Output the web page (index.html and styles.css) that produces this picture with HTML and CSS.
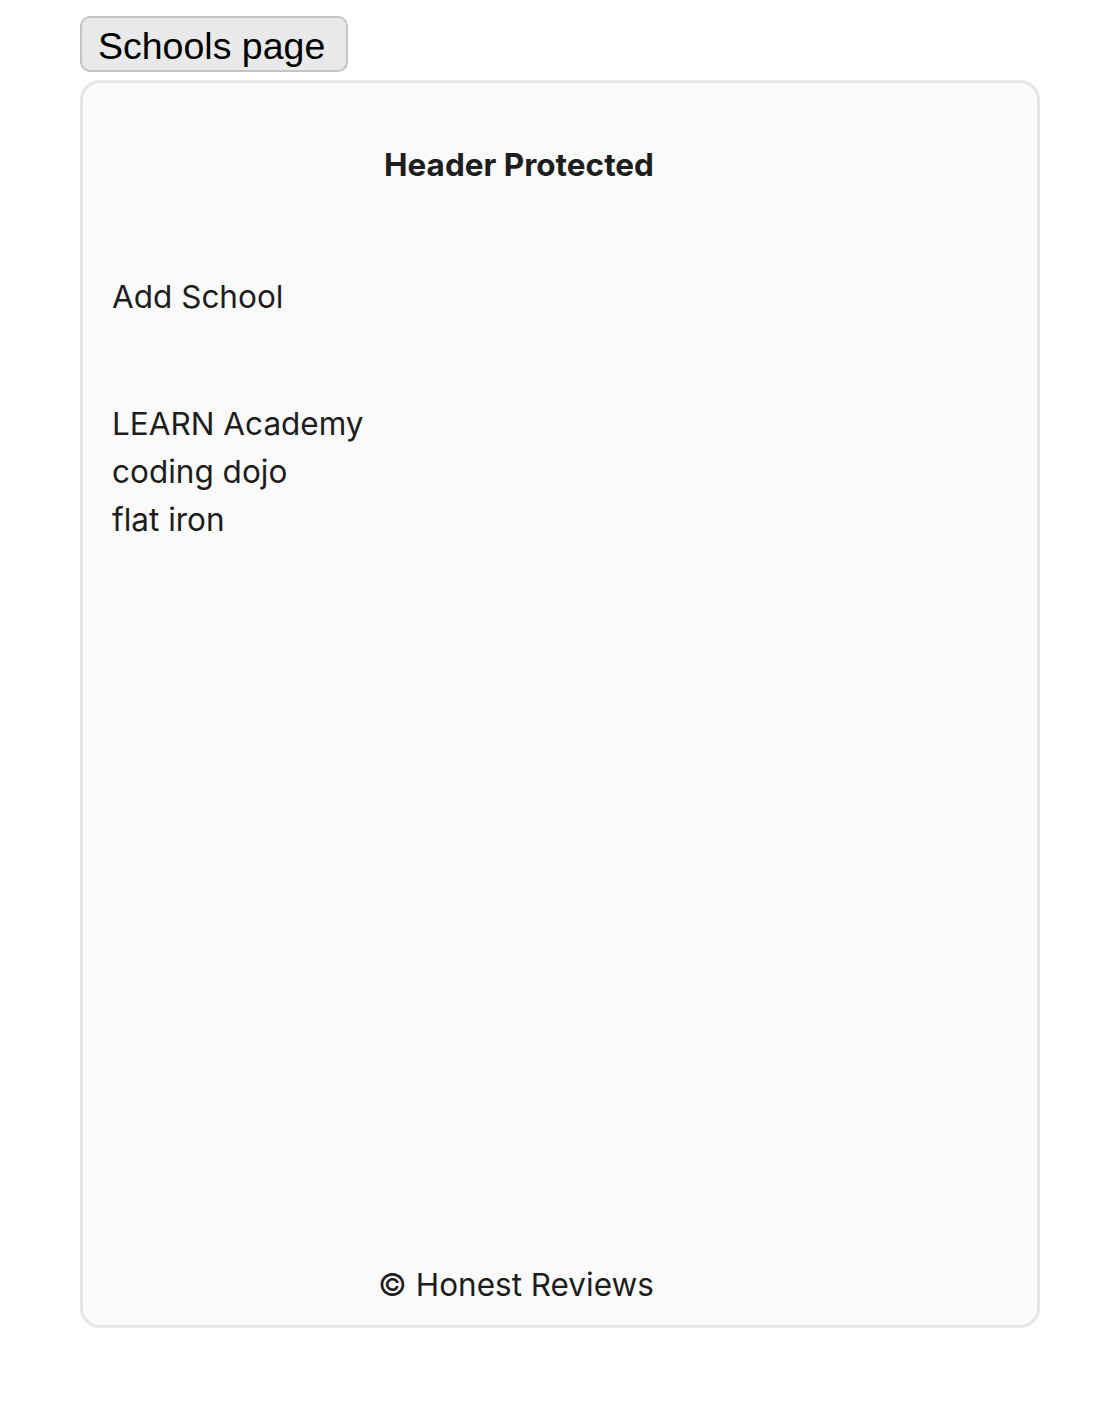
FILE: index.html
```html
<!DOCTYPE html>
<html>
<head>
<meta charset="utf-8">
<link rel="stylesheet" href="styles.css">
</head>
<body>
<div class="page">
  <button class="nav-btn">Schools page</button>
  <div class="card">
    <h1 class="title">Header Protected</h1>
    <div class="add">Add School</div>
    <ul class="schools">
      <li>LEARN Academy</li>
      <li>coding dojo</li>
      <li>flat iron</li>
    </ul>
    <footer class="footer">© Honest Reviews</footer>
  </div>
</div>
</body>
</html>
```
FILE: styles.css
```css
html, body { margin: 0; padding: 0; background: #fff; }
.page {
  padding: 16px 80px 0 80px;
  width: 960px;
  display: flex;
  flex-direction: column;
  align-items: flex-start;
  gap: 8px;
}
.nav-btn {
  box-sizing: border-box;
  font-family: "Liberation Sans", Arial, sans-serif;
  font-size: 37.5px;
  color: #000;
  background: #e9e9e9;
  border: 2px solid #c4c4c4;
  border-radius: 10px;
  width: 268px;
  height: 56px;
  padding: 5px 0 0 16px;
  text-align: left;
  line-height: 1;
  margin: 0;
}
.card {
  box-sizing: border-box;
  width: 960px;
  height: 1248px;
  background: #fafafa;
  border: 3px solid #e6e6e6;
  border-radius: 20px;
  display: flex;
  flex-direction: column;
  padding: 58px 111px 16px 29px;
  font-family: Inter, "Noto Sans", sans-serif;
  font-size: 31.5px;
  line-height: 48px;
  color: #1d1d1d;
}
.title {
  margin: 0;
  font-size: 31.5px;
  font-weight: 700;
  line-height: 48px;
  text-align: center;
}
.add { margin-top: 84px; }
.schools {
  list-style: none;
  margin: 79px 0 0 0;
  padding: 0;
}
.footer {
  margin-top: auto;
  margin-right: 6px;
  text-align: center;
}
```
